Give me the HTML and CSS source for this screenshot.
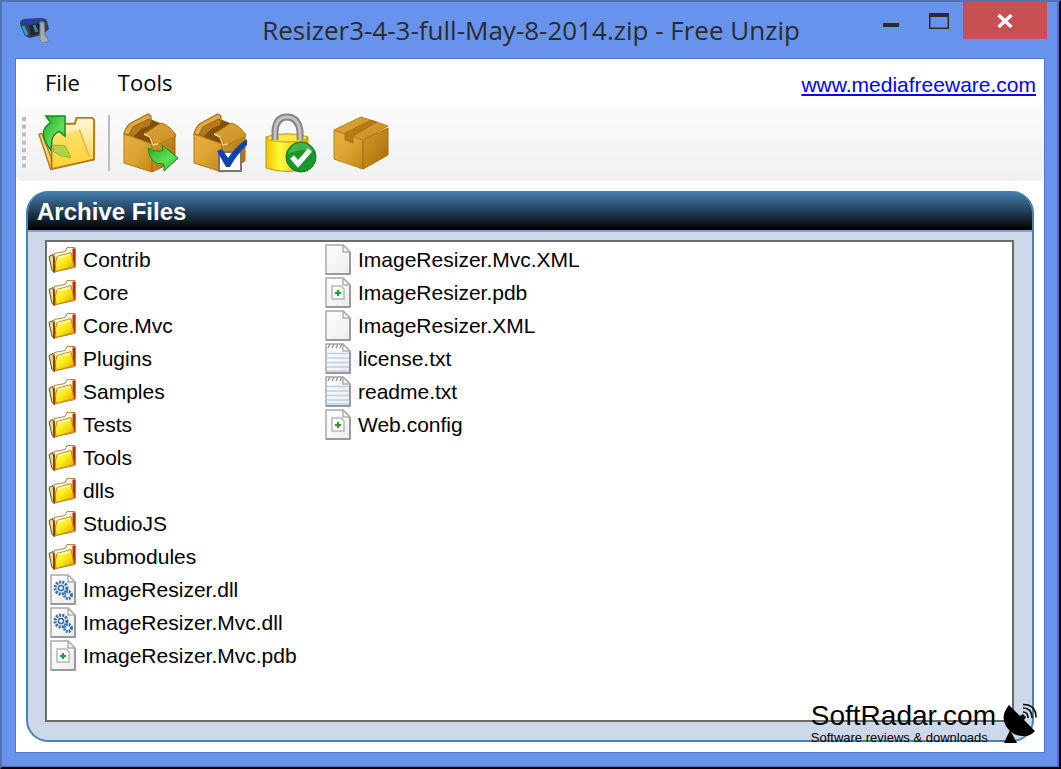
FILE: index.html
```html
<!DOCTYPE html>
<html lang="en">
<head>
<meta charset="utf-8">
<title>Resizer3-4-3-full-May-8-2014.zip - Free Unzip</title>
<link rel="stylesheet" href="styles.css">
</head>
<body>
<svg class="defs" aria-hidden="true">
  <defs>
    <linearGradient id="gold" x1="0" y1="0" x2="1" y2="1"><stop offset="0" stop-color="#e6b040"/><stop offset="0.5" stop-color="#dda435"/><stop offset="1" stop-color="#c08612"/></linearGradient>
    <linearGradient id="goldDark" x1="0" y1="0" x2="1" y2="1"><stop offset="0" stop-color="#d69a26"/><stop offset="1" stop-color="#a86c0c"/></linearGradient>
    <linearGradient id="goldTop" x1="0" y1="0" x2="1" y2="1"><stop offset="0" stop-color="#dda63a"/><stop offset="1" stop-color="#c88f20"/></linearGradient>
    <linearGradient id="green" x1="0" y1="0" x2="1" y2="1"><stop offset="0" stop-color="#2aa52a"/><stop offset="0.6" stop-color="#5fe05a"/><stop offset="1" stop-color="#2bb52b"/></linearGradient>
    <linearGradient id="folderFront" x1="0" y1="0" x2="0" y2="1"><stop offset="0" stop-color="#fffbe0"/><stop offset="1" stop-color="#fbc92c"/></linearGradient>
    <linearGradient id="yellow" x1="0" y1="0" x2="1" y2="0"><stop offset="0" stop-color="#f0c400"/><stop offset="0.35" stop-color="#fffc3c"/><stop offset="1" stop-color="#dda000"/></linearGradient>
    <linearGradient id="smallFolder" x1="0" y1="0" x2="1" y2="1"><stop offset="0" stop-color="#fffb8a"/><stop offset="0.45" stop-color="#ffee1c"/><stop offset="1" stop-color="#e0a400"/></linearGradient>
    <linearGradient id="sheet" x1="0" y1="0" x2="1" y2="1"><stop offset="0" stop-color="#fff"/><stop offset="1" stop-color="#ececec"/></linearGradient>
    <symbol id="folder" viewBox="0 0 30 30">
      <path d="M6 9L17 7 19 3H27V23L8 27z" fill="#fffbe6" stroke="#b9873a"/>
      <path d="M24.500 4H27.500V22L24.500 23z" fill="#c02a08"/>
      <path d="M1 12L5 10 7 28 4 26z" fill="#e9dc92" stroke="#5a5236"/>
      <path d="M6 12V28" stroke="#a53a08" stroke-width="2"/>
      <path d="M9 12L23 8 26 22 8 27Q6 19 9 12z" fill="url(#smallFolder)" stroke="#c08c0c"/>
      <path d="M10 13L22 10" stroke="#fffdd0" stroke-width="1.500"/>
    </symbol>
    <symbol id="page" viewBox="0 0 26 31">
      <path d="M1 1H18L25 8V30H1Z" fill="url(#sheet)" stroke="#a8a8a8" stroke-width="1.500"/>
      <path d="M1 30H25V8" fill="none" stroke="#8f8f8f" stroke-width="1.500"/>
      <path d="M18 1V8H25z" fill="#f7f7f7" stroke="#b0b0b0" stroke-width="1.500"/>
    </symbol>
    <symbol id="config" viewBox="0 0 26 31">
      <use href="#page" width="26" height="31"/>
      <path d="M7 9H16L19 12V22H7Z" fill="#fff" stroke="#b8b8b8" stroke-width="1.500"/>
      <path d="M10 16H16M13 13V19" stroke="#19a81f" stroke-width="2"/>
    </symbol>
    <symbol id="note" viewBox="0 0 26 31">
      <use href="#page" width="26" height="31"/>
      <path d="M2 10.500H24M2 15H24M2 19.500H24M2 24H24M2 28H24" stroke="#b7d4e8" stroke-width="1.500"/>
      <path d="M3 5l2-4M7 5l2-4M11 5l2-4M15 5l2-4" stroke="#999" stroke-width="1.500"/>
    </symbol>
    <symbol id="dll" viewBox="0 0 26 31">
      <use href="#page" width="26" height="31"/>
      <circle cx="11" cy="14" r="6" fill="#d6e8f8" stroke="#3a6ea5" stroke-width="3" stroke-dasharray="2 1.200"/>
      <circle cx="11" cy="14" r="2.500" fill="#fff" stroke="#3a6ea5" stroke-width="1.500"/>
      <circle cx="18" cy="21" r="3.500" fill="#d6e8f8" stroke="#3a6ea5" stroke-width="3" stroke-dasharray="1.800 1"/>
      <circle cx="18" cy="21" r="1" fill="#fff"/>
    </symbol>
    <symbol id="openBox" viewBox="0 0 56 60">
      <path d="M3 21L27 6 42 12 50 22 30 32z" fill="#82500a"/>
      <path d="M6 20L9 13 27 5V12L18 16 10 24z" fill="#b57a1e"/>
      <path d="M1 21L29 31V59L1 50z" fill="url(#gold)" stroke="#b57a12"/>
      <path d="M29 31L52 20V48L29 59z" fill="url(#goldDark)" stroke="#a66c0c"/>
      <path d="M1 21Q3 13 8 10L25 1 28 3V9L26 6 10 14 6 22z" fill="#e0ac48" stroke="#a66c0c" stroke-width="1.200"/>
      <path d="M21 21L38 10Q47 12 53 23L32 33 28 24z" fill="url(#goldTop)" stroke="#b57a12"/>
      <path d="M21 21l6 3 3 8 5-1" fill="none" stroke="#f4d48c" stroke-width="1.500"/>
    </symbol>
  </defs>
</svg>

<div class="window">
  <header class="titlebar">
    <svg class="app-icon" viewBox="0 0 32 28" aria-hidden="true">
      <path d="M1 6Q1 3 5 2L22 1Q27 1 28 4L30 12 23 18 11 21 6 19 2 10z" fill="#35404f"/>
      <path d="M1 5Q11 1 25 2L26 5 5 8z" fill="#1f45a0"/>
      <path d="M4 9l4 9" stroke="#2f9fd0" stroke-width="3"/>
      <path d="M10 8l12-2 1 10-11 3z" fill="#20272e"/>
      <path d="M15 8l3 7" stroke="#3f82a2" stroke-width="3"/>
      <path d="M21 5h4l1 14 3 3v3l-6 1-2-3z" fill="#a9adb3" stroke="#777d86"/>
    </svg>
    <h1 class="title">Resizer3-4-3-full-May-8-2014.zip - Free Unzip</h1>
    <div class="controls">
      <button class="control minimize" aria-label="Minimize"><svg width="16" height="4" viewBox="0 0 16 4"><path d="M0 0h16v4H0z" fill="#2b2b2b"/></svg></button>
      <button class="control" aria-label="Maximize"><svg width="20" height="16" viewBox="0 0 20 16"><path d="M0 0h20v16H0zM1.500 4v10.500h17V4z" fill="#2b2b2b" fill-rule="evenodd"/></svg></button>
      <button class="control close" aria-label="Close"><svg width="16" height="14" viewBox="0 0 16 14"><path d="M1.500 1L14.500 13M14.500 1L1.500 13" stroke="#fff" stroke-width="3.400"/></svg></button>
    </div>
  </header>

  <main class="client">
    <nav class="menu">
      <button class="menu-item">File</button>
      <button class="menu-item">Tools</button>
      <a class="site-link" href="#">www.mediafreeware.com</a>
    </nav>

    <div class="toolbar" role="toolbar">
      <svg class="grip" width="4" height="52" viewBox="0 0 4 52" aria-hidden="true"><path d="M2 0V52" stroke="#bdbdbd" stroke-width="4" stroke-dasharray="4 3.800"/></svg>
      <button class="tool" aria-label="Open archive">
        <svg viewBox="0 0 60 60"><path d="M4 20L1 21 13 57l4-3z" fill="#f3d47b" stroke="#b77a10" stroke-width="1.500"/><path d="M14 20L24 10h14l2-6h16l2 2v41L14 57z" fill="url(#folderFront)" stroke="#b77a10" stroke-width="2"/><path d="M16 24l27-8 11 31-38 8z" fill="#ffd938" opacity=".6"/><path d="M43 16l10 28" stroke="#e0b83c" stroke-width="1.500"/><path d="M16 32l12 1 6 12q-10 0-18-6z" fill="#add54c" stroke="#8db62c"/><path d="M13 37Q-2 18 13 9L8 2h20v21l-6-5Q13 22 14 32z" fill="url(#green)" stroke="#168c22" stroke-width="1.500"/></svg>
      </button>
      <span class="divider"></span>
      <button class="tool" aria-label="Extract"><svg viewBox="0 0 56 60"><use href="#openBox" width="56" height="60"/><path d="M25 35l7 3 8 0-1-6 16 13-14 13v-7q-15 1-16-16z" fill="url(#green)" stroke="#1c8724"/></svg></button>
      <button class="tool" aria-label="Select files"><svg viewBox="0 0 56 60"><use href="#openBox" width="56" height="60"/><path d="M26 39h22v19H26z" fill="#fff" stroke="#777" stroke-width="2"/><path d="M24 38l5-2 6 9Q43 33 54 26v6Q44 41 37 54h-4z" fill="#0e43ac"/></svg></button>
      <button class="tool" aria-label="Password"><svg viewBox="0 0 56 60"><path d="M3 24q20-6 42 0v31q-21 7-42 0z" fill="url(#yellow)" stroke="#c79300"/><ellipse cx="24" cy="25" rx="20" ry="4" fill="#ffe64a" stroke="#d2a100"/><path d="M12 27V18Q13 4 24 4T37 18V27" fill="none" stroke="#858585" stroke-width="7"/><path d="M12 27V18Q13 4 24 4T37 18V27" fill="none" stroke="#c3c3c3" stroke-width="3"/><circle cx="38" cy="44" r="15" fill="#17992a" stroke="#11751c"/><path d="M25 41a13 13 0 0 1 25-3q-11-3-25 3" fill="#69cd6a" opacity=".5"/><path d="M29 44l6 7L47 37" fill="none" stroke="#fff" stroke-width="5"/></svg></button>
      <button class="tool" aria-label="Archive"><svg viewBox="0 0 56 60"><path d="M1 17L30 27V56L1 46z" fill="url(#gold)" stroke="#ba8014"/><path d="M30 27L55 15V42L30 56z" fill="url(#goldDark)" stroke="#a66c0c"/><path d="M1 17L28 4 55 13 30 27z" fill="url(#goldTop)" stroke="#b98018"/><path d="M12 20L38 7l6 2L20 23v7l-8-3z" fill="#b77b12" stroke="#a36a0c" stroke-width=".7"/></svg></button>
    </div>

    <section class="panel">
      <h2 class="panel-title">Archive Files</h2>
      <div class="panel-body">
        <ul class="files">
          <li class="file"><svg class="icon"><use href="#folder"/></svg>Contrib</li>
          <li class="file"><svg class="icon"><use href="#folder"/></svg>Core</li>
          <li class="file"><svg class="icon"><use href="#folder"/></svg>Core.Mvc</li>
          <li class="file"><svg class="icon"><use href="#folder"/></svg>Plugins</li>
          <li class="file"><svg class="icon"><use href="#folder"/></svg>Samples</li>
          <li class="file"><svg class="icon"><use href="#folder"/></svg>Tests</li>
          <li class="file"><svg class="icon"><use href="#folder"/></svg>Tools</li>
          <li class="file"><svg class="icon"><use href="#folder"/></svg>dlls</li>
          <li class="file"><svg class="icon"><use href="#folder"/></svg>StudioJS</li>
          <li class="file"><svg class="icon"><use href="#folder"/></svg>submodules</li>
          <li class="file"><svg class="icon"><use href="#dll"/></svg>ImageResizer.dll</li>
          <li class="file"><svg class="icon"><use href="#dll"/></svg>ImageResizer.Mvc.dll</li>
          <li class="file"><svg class="icon"><use href="#config"/></svg>ImageResizer.Mvc.pdb</li>
          <li class="file"><svg class="icon"><use href="#page"/></svg>ImageResizer.Mvc.XML</li>
          <li class="file"><svg class="icon"><use href="#config"/></svg>ImageResizer.pdb</li>
          <li class="file"><svg class="icon"><use href="#page"/></svg>ImageResizer.XML</li>
          <li class="file"><svg class="icon"><use href="#note"/></svg>license.txt</li>
          <li class="file"><svg class="icon"><use href="#note"/></svg>readme.txt</li>
          <li class="file"><svg class="icon"><use href="#config"/></svg>Web.config</li>
        </ul>
      </div>
    </section>
  </main>

  <aside class="watermark">
    <div class="watermark-text">
      <span class="brand">SoftRadar.com</span>
      <span class="tagline">Software reviews &amp; downloads</span>
    </div>
    <svg class="dish" width="34" height="42" viewBox="0 0 34 42" aria-hidden="true"><path d="M6 2Q-3 13 3 23T20 33Q27 34 32 28L21 17 23 14 20 11 17 13z"/><path d="M7 27l7 13H1z"/><path d="M20 9q5 0 5 6M20 5q9 0 9 10M20 1.500q13 0 13 13" fill="none" stroke="#000" stroke-width="1.600"/></svg>
  </aside>
</div>
</body>
</html>
```
FILE: styles.css
```css
* { box-sizing: border-box; }

body {
  margin: 0;
  font-family: "Liberation Sans", Arial, sans-serif;
  font-size: 21px;
  color: #000;
}

button {
  padding: 0;
  border: 0;
  background: none;
  font: inherit;
  color: inherit;
}

svg { display: block; }

.defs { position: absolute; width: 0; height: 0; }

.window {
  position: relative;
  display: flex;
  flex-direction: column;
  min-height: 100vh;
  padding: 0 12px 14px 13px;
  border: 2px solid #4f72b8;
  border-right-color: #000;
  border-bottom-color: #000;
  background: #6893ec;
  box-shadow: inset -2px -1px #4f72b8;
}

.titlebar {
  display: grid;
  grid-template-columns: 1fr auto 1fr;
  height: 56px;
}

.app-icon { width: 32px; height: 28px; margin: 15px 0 0 4px; }

.title {
  align-self: center;
  margin: 0;
  font-family: "Open Sans", "Noto Sans", sans-serif;
  font-size: 26px;
  font-weight: 400;
  line-height: 32px;
  color: #2b2b2b;
}

.controls { display: flex; justify-content: flex-end; height: 37px; }

.control {
  display: flex;
  align-items: center;
  justify-content: center;
  width: 48px;
}

.minimize { padding-top: 9px; }

.close { width: 84px; background: #c75050; }

.client {
  display: flex;
  flex: 1;
  flex-direction: column;
  margin-right: 2px;
  border: 1px solid #5578c0;
  background: #fff;
}

.menu {
  display: flex;
  align-items: center;
  gap: 38px;
  height: 45px;
  padding: 0 8px 0 29px;
}

.menu-item { font-family: "Open Sans", "Noto Sans", sans-serif; font-size: 22px; }

.site-link { margin-left: auto; padding-top: 6px; color: #00f; }

.toolbar {
  display: flex;
  align-items: center;
  height: 77px;
  padding: 0 6px;
  gap: 12px;
  border-radius: 0 0 6px 6px;
  background: linear-gradient(#fcfcfc, #f0f0f0);
}

.tool { width: 58px; height: 60px; }
.tool svg { width: 100%; height: 100%; }

.divider { width: 2px; height: 56px; background: #bdbdbd; }

.panel {
  display: flex;
  flex: 1;
  flex-direction: column;
  margin: 10px;
  overflow: hidden;
  border: 2px solid #4682b4;
  border-top: 0;
  border-radius: 22px;
  background: #cdd9ea;
}

.panel-title {
  height: 41px;
  margin: 0;
  padding: 0 9px;
  border-bottom: 2px solid #7fa6cf;
  background: linear-gradient(#4682b4, #000);
  color: #fff;
  font-size: 24px;
  line-height: 42px;
}

.panel-body { display: flex; flex: 1; padding: 8px 18px 18px 17px; }

.files {
  display: grid;
  flex: 1;
  grid-template-rows: repeat(13, 33px);
  grid-auto-columns: 275px;
  grid-auto-flow: column;
  align-content: start;
  margin: 0;
  padding: 1px;
  border: 2px solid #6b6b6b;
  background: #fff;
  list-style: none;
}

.file { display: flex; align-items: center; gap: 5px; line-height: 33px; }

.icon { width: 30px; height: 31px; }

.watermark {
  position: absolute;
  right: 22px;
  bottom: 22px;
  display: flex;
  align-items: flex-end;
  gap: 7px;
}

.watermark-text { display: flex; flex-direction: column; }
.brand { font-size: 28px; line-height: 28px; }
.tagline { font-size: 13px; line-height: 15px; }
```
